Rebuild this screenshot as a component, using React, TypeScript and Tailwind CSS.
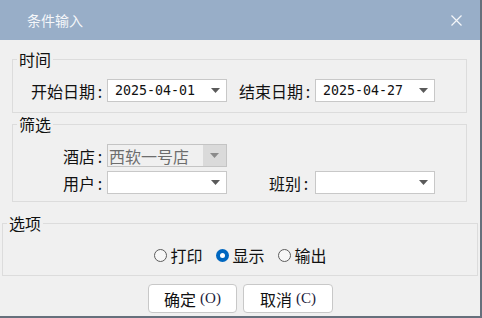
import React from "react";

const Arrow = ({ color = "#5a5a5a" }: { color?: string }) => (
  <svg width="9" height="5" viewBox="0 0 9 5" className="block">
    <polygon points="0,0 9,0 4.5,5" fill={color} />
  </svg>
);

function Label({ text, className }: { text: string; className: string }) {
  return (
    <span className={"flex items-center text-[16px] leading-none " + className}>
      <span>{text}</span>
      <span className="w-[10px] text-center">:</span>
    </span>
  );
}

function Combo({
  value,
  disabled,
  mono,
}: {
  value?: string;
  disabled?: boolean;
  mono?: boolean;
}) {
  if (disabled) {
    return (
      <div className="flex h-[23px] w-[120px] items-stretch border border-[#c4c4c4] bg-[#f0f0f0]">
        <div className="flex flex-1 items-center pl-[1px] text-[16px] leading-none text-[#6d6d6d]">
          {value}
        </div>
        <div className="flex w-[23px] items-center justify-center bg-[#dadada]">
          <Arrow color="#8a8a8a" />
        </div>
      </div>
    );
  }
  return (
    <div className="flex h-[23px] w-[120px] items-center border border-[#c8c8c8] bg-white">
      <div
        className={
          mono
            ? "flex-1 pl-[7px] font-['DejaVu_Sans_Mono',monospace] text-[13.3px] leading-none text-[#111]"
            : "flex-1 pl-[2px] text-[16px] leading-none"
        }
      >
        {value}
      </div>
      <div className="mr-[6px] flex w-[9px] items-center">
        <Arrow />
      </div>
    </div>
  );
}

function Radio({ label, checked }: { label: string; checked?: boolean }) {
  return (
    <div className="flex items-center">
      {checked ? (
        <div className="flex h-[13px] w-[13px] items-center justify-center rounded-full bg-[#0067c0]">
          <div className="h-[5px] w-[5px] rounded-full bg-white" />
        </div>
      ) : (
        <div className="h-[13px] w-[13px] rounded-full border border-[#5c5c5c] bg-[#f7f7f7]" />
      )}
      <span className="ml-[4px] w-[32px] text-[16px] leading-[20px]">{label}</span>
    </div>
  );
}

export default function App() {
  return (
    <div className="h-[318px] w-[482px] border-b-2 border-r-2 border-[#66707c] bg-[#f0f0f0] font-['Noto_Sans_CJK_SC','Noto_Sans',sans-serif] text-[#111]">
      {/* title bar */}
      <div className="flex h-[40px] items-center justify-between bg-[#98aec8] pl-[27px] pr-[18px]">
        <span className="text-[14px] leading-none text-[#f5f7fa]">条件输入</span>
        <svg width="11" height="11" viewBox="0 0 11 11" className="block">
          <path d="M0.5 0.5 L10.5 10.5 M10.5 0.5 L0.5 10.5" stroke="#f5f7fa" strokeWidth="1.2" />
        </svg>
      </div>

      {/* 时间 */}
      <fieldset className="ml-[12px] mt-[9px] w-[455px] border border-[#dcdcdc] pb-[10px] pl-[4px] pr-[4px] pt-[10px]">
        <legend className="px-[2px] text-[16px] leading-[20px]">时间</legend>
        <div className="ml-[14px] flex items-center">
          <Label text="开始日期" className="w-[76px]" />
          <Combo value="2025-04-01" mono />
          <Label text="结束日期" className="ml-[12px] w-[76px]" />
          <Combo value="2025-04-27" mono />
        </div>
      </fieldset>

      {/* 筛选 */}
      <fieldset className="ml-[12px] mt-[1px] w-[455px] border border-[#dcdcdc] pb-[7px] pl-[4px] pr-[4px] pt-[10px]">
        <legend className="px-[2px] text-[16px] leading-[20px]">筛选</legend>
        <div className="flex flex-col gap-[4px]">
          <div className="flex items-center">
            <Label text="酒店" className="w-[90px] justify-end pr-[2px]" />
            <Combo value="西软一号店" disabled />
          </div>
          <div className="flex items-center">
            <Label text="用户" className="w-[90px] justify-end pr-[2px]" />
            <Combo />
            <Label text="班别" className="w-[88px] justify-end pr-[4px]" />
            <Combo />
          </div>
        </div>
      </fieldset>

      {/* 选项 */}
      <fieldset className="ml-[2px] mt-[11px] w-[476px] border border-[#dcdcdc] pb-[10px] pl-[4px] pr-[4px] pt-[12px]">
        <legend className="px-[2px] text-[16px] leading-[20px]">选项</legend>
        <div className="flex items-center justify-center gap-[13px]">
          <Radio label="打印" />
          <Radio label="显示" checked />
          <Radio label="输出" />
        </div>
      </fieldset>

      {/* buttons */}
      <div className="mt-[8px] flex justify-center gap-[6px] pl-[1px]">
        <button className="flex h-[29px] w-[89px] items-center justify-center rounded-[4px] border border-[#c8c8c8] bg-white text-[16px] leading-none text-[#111]">
          确定<span className="ml-[4px] font-['Liberation_Serif',serif] text-[15px] text-[#1a1a3a]">(O)</span>
        </button>
        <button className="flex h-[29px] w-[90px] items-center justify-center rounded-[4px] border border-[#c8c8c8] bg-white text-[16px] leading-none text-[#111]">
          取消<span className="ml-[4px] font-['Liberation_Serif',serif] text-[15px] text-[#1a1a3a]">(C)</span>
        </button>
      </div>
    </div>
  );
}
